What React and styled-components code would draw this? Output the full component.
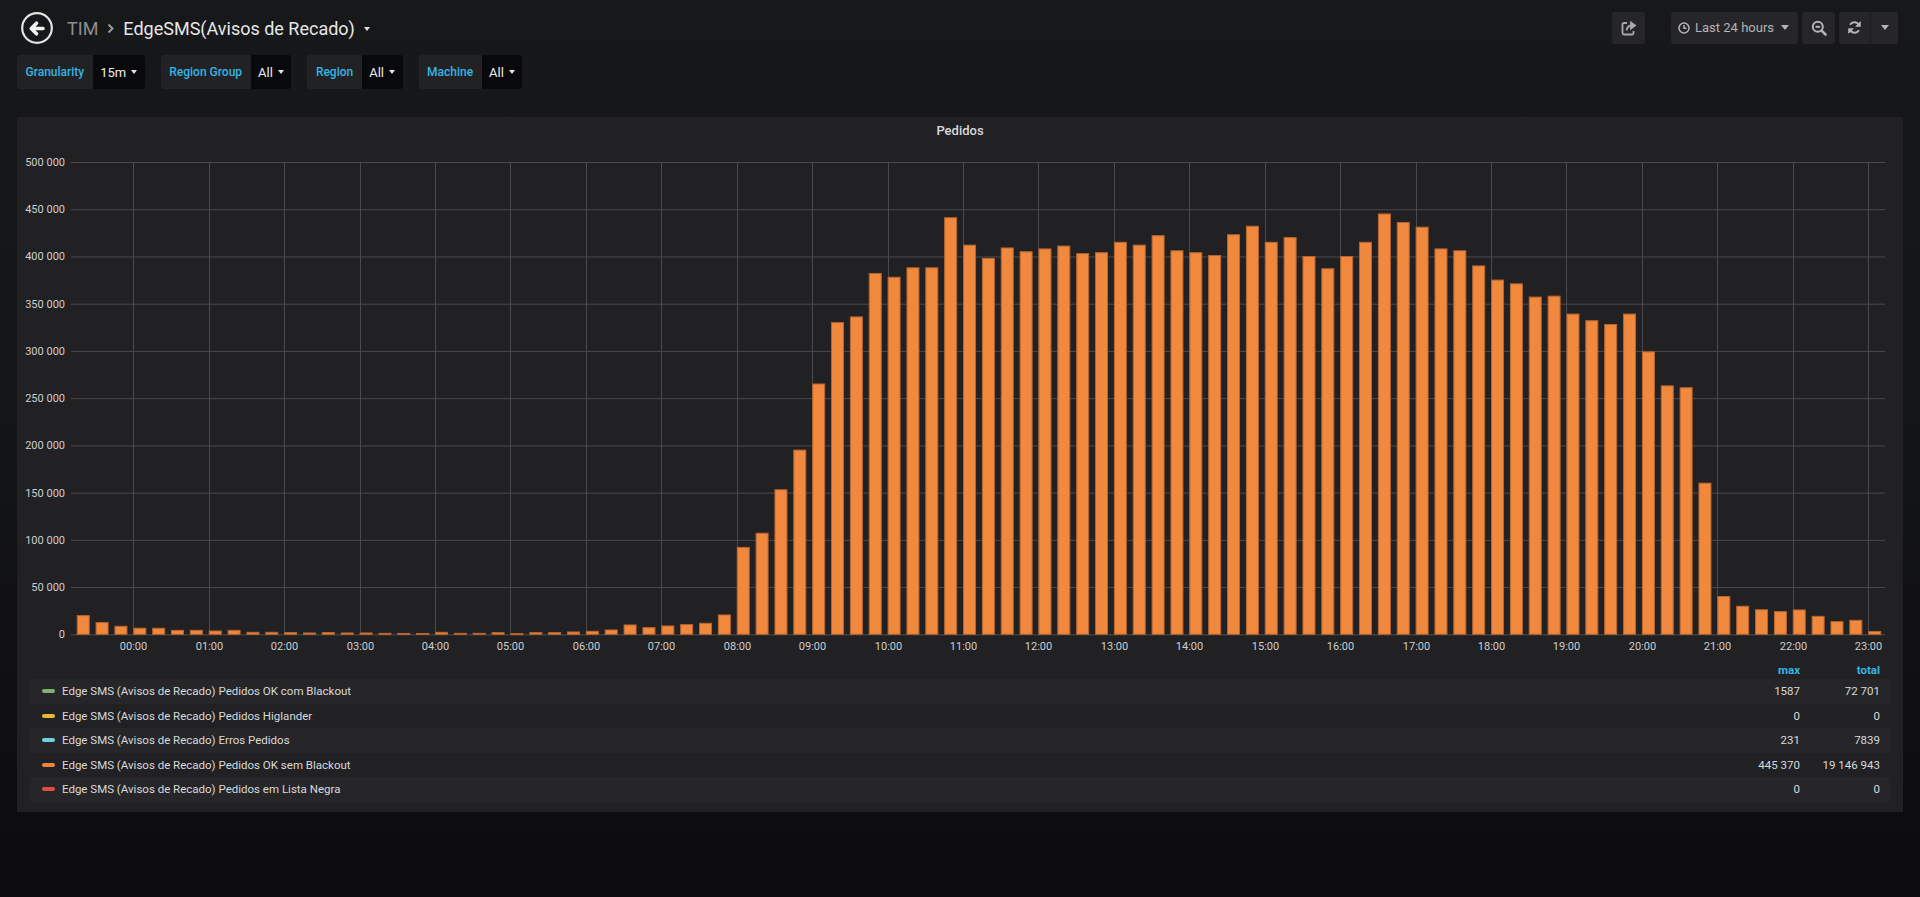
import React from 'react';
import styled, { createGlobalStyle } from 'styled-components';

const GlobalStyle = createGlobalStyle`
  html, body { margin: 0; padding: 0; }
  body {
    background: #0c0c0f;
    font-family: Roboto, "Liberation Sans", Arial, sans-serif;
    color: #d8d9da;
  }
  * { box-sizing: border-box; }
`;

const Page = styled.div`
  min-height: 897px;
  background: linear-gradient(180deg, #17181a 0%, #141517 45%, #0c0c0f 100%);
  overflow: hidden;
`;

const NavBar = styled.div`
  display: flex;
  align-items: center;
  height: 55px;
  padding: 0 22px 0 21px;
`;

const BackButton = styled.div`
  width: 32px;
  height: 32px;
  display: flex;
  flex-shrink: 0;
`;

const Breadcrumb = styled.div`
  display: flex;
  align-items: center;
  margin-left: 14px;
  font-size: 18px;
  line-height: 1;
  padding-top: 2px;
`;

const Crumb = styled.span`
  color: ${(p) => (p.$active ? '#e6e7e8' : '#8e8e8e')};
`;

const Sep = styled.span`
  display: inline-flex;
  margin: 0 9px 0 9px;
  color: #9a9a9a;
`;

const Caret = styled.span`
  display: inline-block;
  width: 0;
  height: 0;
  border-left: ${(p) => p.$w || 3.5}px solid transparent;
  border-right: ${(p) => p.$w || 3.5}px solid transparent;
  border-top: ${(p) => p.$h || 4}px solid ${(p) => p.$color || '#e3e3e3'};
  margin-left: ${(p) => p.$ml || 0}px;
`;

const ToolBar = styled.div`
  margin-left: auto;
  display: flex;
  align-items: center;
  gap: 4px;
`;

const NavButton = styled.div`
  height: 32px;
  min-width: ${(p) => p.$w || 33}px;
  background: #262628;
  border-radius: ${(p) => p.$radius || '3px'};
  display: flex;
  align-items: center;
  justify-content: center;
  color: #b4b4b6;
  font-size: 13px;
  margin-right: ${(p) => p.$mr || 0}px;
  gap: 5px;
  padding: ${(p) => p.$pad || '0'};
`;

const ButtonGroup = styled.div`
  display: flex;
  gap: 1px;
  background: #1c1c1e;
  border-radius: 3px;
`;

const SubMenu = styled.div`
  display: flex;
  gap: 16px;
  padding: 0 17px;
  height: 34px;
`;

const VarItem = styled.div`
  display: flex;
  height: 34px;
  border-radius: 3px;
  overflow: hidden;
  box-shadow: inset 0 0 0 1px #1b1b1d;
`;

const VarLabel = styled.div`
  display: flex;
  align-items: center;
  background: #222225;
  color: #33b5e5;
  font-size: 12px;
  font-weight: 500;
  padding: 0 8.5px;
`;

const VarValue = styled.div`
  display: flex;
  align-items: center;
  gap: 5px;
  background: #09090b;
  color: #ebebeb;
  font-size: 13px;
  padding: 0 7.5px;
`;

const Panel = styled.div`
  margin: 28px 17px 0;
  background: #212124;
  padding: 0 13px 10px;
`;

const PanelTitle = styled.div`
  height: 28px;
  line-height: 28px;
  text-align: center;
  font-size: 13px;
  font-weight: 500;
  color: #d8d9da;
`;

const ChartWrap = styled.div`
  margin: 0 -13px;
  height: 515px;
  svg { display: block; }
`;

const LegendGrid = styled.div`
  display: grid;
  grid-template-columns: 1fr 80px 80px;
  padding-right: 10px;
  align-items: center;
  height: ${(p) => p.$h}px;
  background: ${(p) => (p.$odd ? '#262628' : 'transparent')};
  font-size: 11.5px;
`;

const HeadCell = styled.div`
  text-align: right;
  color: #33b5e5;
  font-weight: 700;
  font-size: 11.5px;
`;

const NameCell = styled.div`
  display: flex;
  align-items: center;
  gap: 7px;
  padding-left: 12px;
  color: #d8d9da;
`;

const Swatch = styled.span`
  display: inline-block;
  width: 13px;
  height: 4px;
  border-radius: 2px;
  background: ${(p) => p.$color};
`;

const ValueCell = styled.div`
  text-align: right;
  color: #d8d9da;
`;

const values = [
  19800, 12400, 8500, 6400, 6400, 4200, 4200, 3500, 4200, 2100, 2100, 1800, 1400, 1800, 1400, 1400,
  1000, 900, 900, 2100, 1000, 1000, 1770, 700, 1770, 1770, 2470, 3180, 4590, 9880, 7060, 8830,
  10240, 11650, 20470, 92000, 107000, 153000, 195000, 265000, 330000, 336000, 382000, 378000, 388000, 388000,
  441000, 412000, 398000, 409000, 405000, 408000, 411000, 403000, 404000, 415000, 412000, 422000, 406000,
  404000, 401000, 423000, 432000, 415000, 420000, 400000, 387000, 400000, 415000, 445000, 436000, 431000,
  408000, 406000, 390000, 375000, 371000, 357000, 358000, 339000, 332000, 328000, 339000, 299000, 263000,
  261000, 160000, 40000, 29700, 26000, 24000, 25800, 19000, 13400, 14800, 3000,
];

const X0 = 133.3; // 00:00
const HOUR = 75.43;
const STEP = HOUR / 4;
const Y0 = 634.3;
const YTOP = 162;
const yOf = (v) => Y0 - (v / 500000) * (Y0 - YTOP);
const fmt = (n) => String(n).replace(/\B(?=(\d{3})+(?!\d))/g, ' ');

function Chart() {
  const ticks = [];
  for (let v = 0; v <= 500000; v += 50000) ticks.push(v);
  const hours = [];
  for (let h = 0; h < 24; h++) hours.push(h);
  return (
    <svg width="1886" height="515" viewBox="17 145 1886 515">
      {ticks.map((v) => (
        <g key={v}>
          <line x1="71" x2="1885" y1={yOf(v) + 0.5} y2={yOf(v) + 0.5} stroke="#4a4a4d" strokeWidth="1" />
          <text x="65" y={yOf(v) + 4} textAnchor="end" fontSize="11" fill="#cdcecf" fontFamily="Roboto, sans-serif">
            {fmt(v)}
          </text>
        </g>
      ))}
      {hours.map((h) => {
        const x = Math.round(X0 + h * HOUR) + 0.5;
        return (
          <g key={h}>
            <line x1={x} x2={x} y1={YTOP} y2={Y0} stroke="#4a4a4d" strokeWidth="1" />
            <text x={x} y="650" textAnchor="middle" fontSize="11" fill="#cdcecf" fontFamily="Roboto, sans-serif">
              {String(h).padStart(2, '0')}:00
            </text>
          </g>
        );
      })}
      {values.map((v, i) => {
        const x = X0 + (i - 3) * STEP;
        const y = yOf(v);
        return (
          <rect
            key={i}
            x={x + 0.5}
            y={y}
            width={12}
            height={Math.max(Y0 - y, 1)}
            fill="#f0883e"
            stroke="#b8652e"
            strokeWidth="1"
          />
        );
      })}
    </svg>
  );
}

const legend = [
  { name: 'Edge SMS (Avisos de Recado) Pedidos OK com Blackout', color: '#7eb26d', max: '1587', total: '72 701' },
  { name: 'Edge SMS (Avisos de Recado) Pedidos Higlander', color: '#eab839', max: '0', total: '0' },
  { name: 'Edge SMS (Avisos de Recado) Erros Pedidos', color: '#6ed0e0', max: '231', total: '7839' },
  { name: 'Edge SMS (Avisos de Recado) Pedidos OK sem Blackout', color: '#ef843c', max: '445 370', total: '19 146 943' },
  { name: 'Edge SMS (Avisos de Recado) Pedidos em Lista Negra', color: '#e24d42', max: '0', total: '0' },
];

const BackIcon = () => (
  <svg width="32" height="32" viewBox="0 0 32 32">
    <circle cx="16" cy="16" r="14.8" fill="none" stroke="#e3e3e3" strokeWidth="2.2" />
    <path d="M22 16.5 H10.5 M15.5 11.2 L10.3 16.5 L15.5 21.8" fill="none" stroke="#f2f2f2" strokeWidth="3.6" strokeLinecap="round" strokeLinejoin="round" />
  </svg>
);

const ChevronIcon = () => (
  <svg width="7" height="11" viewBox="0 0 7 11">
    <path d="M1.5 1.5 L5.5 5.5 L1.5 9.5" fill="none" stroke="#9a9a9a" strokeWidth="2" />
  </svg>
);

const ShareIcon = () => (
  <svg width="16" height="16" viewBox="0 0 16 16" fill="none" stroke="#a9a9ab" strokeWidth="1.8">
    <path d="M6 3 H3 a1.5 1.5 0 0 0 -1.5 1.5 V13 a1.5 1.5 0 0 0 1.5 1.5 H11 a1.5 1.5 0 0 0 1.5 -1.5 V11" />
    <path d="M5.5 10.5 C6 7 8.5 5.5 11 5.5" />
    <path d="M10 2.5 L14 5.5 L10 8.5 Z" fill="#a9a9ab" />
  </svg>
);

const ClockIcon = () => (
  <svg width="12" height="12" viewBox="0 0 12 12" fill="none" stroke="#b4b4b6" strokeWidth="1.5">
    <circle cx="6" cy="6" r="5" />
    <path d="M6 3 V6.3 H8.5" />
  </svg>
);

const ZoomOutIcon = () => (
  <svg width="16" height="16" viewBox="0 0 16 16" fill="none" stroke="#b4b4b6" strokeWidth="2">
    <circle cx="6.8" cy="6.8" r="5" />
    <path d="M4.5 6.8 H9.1" />
    <path d="M10.6 10.6 L14.5 14.5" strokeWidth="2.6" strokeLinecap="round" />
  </svg>
);

const RefreshIcon = () => (
  <svg width="15" height="15" viewBox="0 0 16 16" fill="none" stroke="#b4b4b6" strokeWidth="2.2">
    <path d="M13 6 A5.5 5.5 0 0 0 3.2 5" />
    <path d="M3 10 A5.5 5.5 0 0 0 12.8 11" />
    <path d="M14.3 1.8 V6.8 H9.3 Z" fill="#b4b4b6" strokeWidth="0.8" />
    <path d="M1.7 14.2 V9.2 H6.7 Z" fill="#b4b4b6" strokeWidth="0.8" />
  </svg>
);

const variables = [
  { label: 'Granularity', value: '15m' },
  { label: 'Region Group', value: 'All' },
  { label: 'Region', value: 'All' },
  { label: 'Machine', value: 'All' },
];

export default function App() {
  return (
    <Page>
      <GlobalStyle />
      <NavBar>
        <BackButton>
          <BackIcon />
        </BackButton>
        <Breadcrumb>
          <Crumb>TIM</Crumb>
          <Sep>
            <ChevronIcon />
          </Sep>
          <Crumb $active>EdgeSMS(Avisos de Recado)</Crumb>
          <Caret $ml={9} $w={3.5} $h={4} />
        </Breadcrumb>
        <ToolBar>
          <NavButton $mr={22}>
            <ShareIcon />
          </NavButton>
          <NavButton $pad="0 9px 0 7px">
            <ClockIcon />
            <span>Last 24 hours</span>
            <Caret $ml={2} $w={4} $h={5} $color="#b4b4b6" />
          </NavButton>
          <NavButton>
            <ZoomOutIcon />
          </NavButton>
          <ButtonGroup>
            <NavButton $w={31} $radius="3px 0 0 3px">
              <RefreshIcon />
            </NavButton>
            <NavButton $w={27} $radius="0 3px 3px 0">
              <Caret $w={4} $h={5} $color="#b4b4b6" />
            </NavButton>
          </ButtonGroup>
        </ToolBar>
      </NavBar>
      <SubMenu>
        {variables.map((v) => (
          <VarItem key={v.label}>
            <VarLabel>{v.label}</VarLabel>
            <VarValue>
              <span>{v.value}</span>
              <Caret $w={3.5} $h={4} />
            </VarValue>
          </VarItem>
        ))}
      </SubMenu>
      <Panel>
        <PanelTitle>Pedidos</PanelTitle>
        <ChartWrap>
          <Chart />
        </ChartWrap>
        <LegendGrid $h={19}>
          <div />
          <HeadCell>max</HeadCell>
          <HeadCell>total</HeadCell>
        </LegendGrid>
        {legend.map((l, i) => (
          <LegendGrid key={l.name} $h={24.5} $odd={i % 2 === 0}>
            <NameCell>
              <Swatch $color={l.color} />
              <span>{l.name}</span>
            </NameCell>
            <ValueCell>{l.max}</ValueCell>
            <ValueCell>{l.total}</ValueCell>
          </LegendGrid>
        ))}
      </Panel>
    </Page>
  );
}
